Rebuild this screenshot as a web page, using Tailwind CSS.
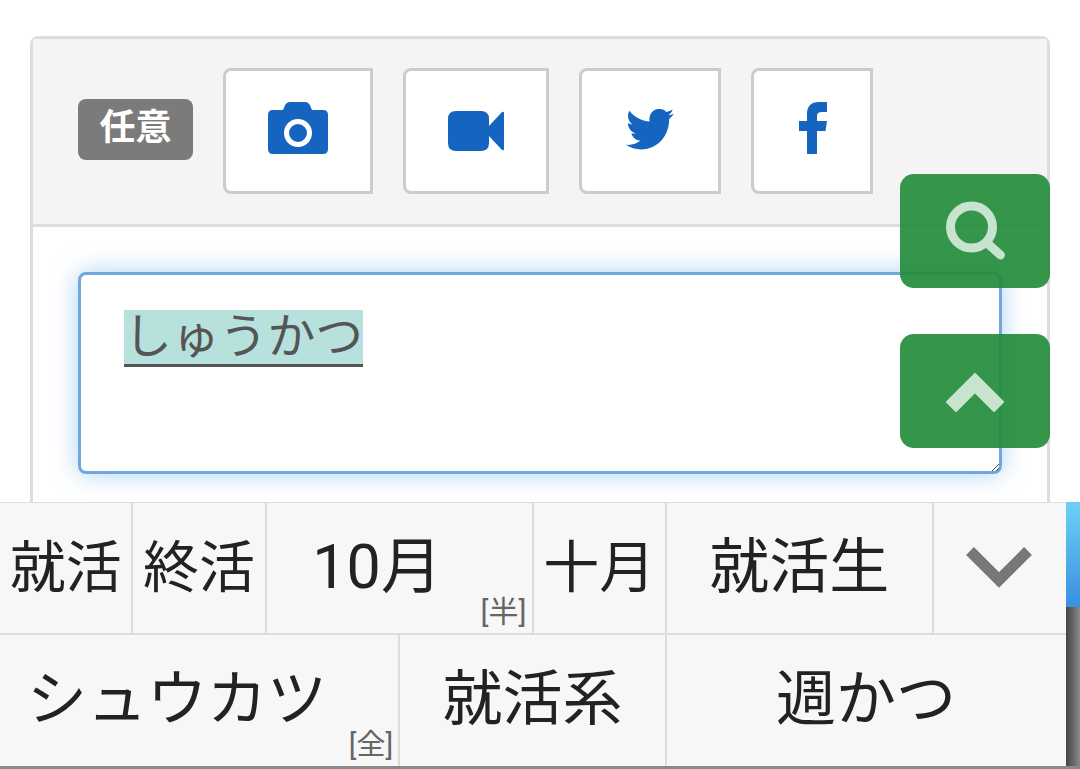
<!DOCTYPE html>
<html lang="ja">
<head>
  <meta charset="UTF-8" />
  <title>投稿フォーム</title>
  <script src="https://cdn.jsdelivr.net/npm/@tailwindcss/browser@4"></script>
</head>
<body class="relative h-[769px] overflow-hidden bg-white font-['Roboto','Noto_Sans_CJK_JP',sans-serif]">

  <!-- Form card -->
  <div class="px-[30px] pt-[36px]">
    <div class="h-[733px] rounded-t-lg border-[3px] border-b-0 border-[#dddddd] bg-white">

      <!-- Attachment row -->
      <div class="flex h-[188px] items-start gap-[30px] border-b-[3px] border-[#dddddd] bg-[#f4f4f4] pl-[45px] pt-[29px]">
        <span class="mt-[31px] flex h-[61px] w-[115px] items-center justify-center rounded-lg bg-[#7b7b7b] pb-[3px] text-[36px] font-bold text-white">任意</span>

        <button class="flex h-[126px] w-[150px] items-center justify-center rounded-l-lg border-[3px] border-[#cccccc] bg-white">
          <svg class="-mt-[6px] h-[52px] w-[60px] text-[#1565c0]" viewBox="0 0 60 52" fill="currentColor">
            <path fill-rule="evenodd" d="M5 8h10l1.500-3.500Q18 0 22 0h15q4 0 5.500 4.500L44 8h11q5 0 5 5v34q0 5-5 5H5q-5 0-5-5V13q0-5 5-5zM30 17a14 14 0 1 0 0 28 14 14 0 0 0 0-28zM30 22a9 9 0 1 1 0 18 9 9 0 0 1 0-18z"/>
          </svg>
        </button>

        <button class="flex h-[126px] w-[146px] items-center justify-center rounded-l-lg border-[3px] border-[#cccccc] bg-white">
          <svg class="h-[40px] w-[56px] text-[#1565c0]" viewBox="0 0 56 40" fill="currentColor">
            <path d="M8 0h25q8 0 8 8v24q0 8-8 8H8q-8 0-8-8V8q0-8 8-8z"/>
            <path d="M41 15 54 1q2-1 2 1v36q0 2-2 1L41 25z"/>
          </svg>
        </button>

        <button class="flex h-[126px] w-[142px] items-center justify-center rounded-l-lg border-[3px] border-[#cccccc] bg-white">
          <svg class="-mt-[3px] h-[41px] w-[48px] text-[#1565c0]" viewBox="0 50 512 420" preserveAspectRatio="none" fill="currentColor">
            <path d="M459.37 151.716c.325 4.548.325 9.097.325 13.645 0 138.72-105.583 298.558-298.558 298.558-59.452 0-114.68-17.219-161.137-47.106 8.447.974 16.568 1.299 25.34 1.299 49.055 0 94.213-16.568 130.274-44.832-46.132-.975-84.792-31.188-98.112-72.772 6.498.974 12.995 1.624 19.818 1.624 9.421 0 18.843-1.3 27.614-3.573-48.081-9.747-84.143-51.98-84.143-102.985v-1.299c13.969 7.797 30.214 12.67 47.431 13.319-28.264-18.843-46.781-51.005-46.781-87.391 0-19.492 5.197-37.36 14.294-52.954 51.655 63.675 129.3 105.258 216.365 109.807-1.624-7.797-2.599-15.918-2.599-24.04 0-57.828 46.782-104.934 104.934-104.934 30.213 0 57.502 12.67 76.67 33.137 23.715-4.548 46.456-13.32 66.599-25.34-7.798 24.366-24.366 44.833-46.132 57.827 21.117-2.273 41.584-8.122 60.426-16.243-14.292 20.791-32.161 39.308-52.628 54.253z"/>
          </svg>
        </button>

        <button class="flex h-[126px] w-[122px] items-center justify-center rounded-l-lg border-[3px] border-[#cccccc] bg-white">
          <svg class="-mt-[6px] ml-[1px] h-[52px] w-[28px] text-[#1565c0]" viewBox="0 0 28 52" fill="currentColor">
            <path d="M8 52V29H0V19h8v-7Q8 0 20 0h8v10h-5q-5 0-5 4v5h10l-1.500 10H18v23z"/>
          </svg>
        </button>
      </div>

      <!-- Text input -->
      <div class="px-[45px] pt-[45px]">
        <div class="relative h-[202px] w-[924px] rounded-lg border-[3px] border-[#6fa8dc] bg-white px-[43px] pt-[35px] shadow-[0_0_24px_rgba(102,175,233,0.55)]">
          <span class="inline-block h-[57px] border-b-[3px] border-[#555555] bg-[#b7e1dc] text-[47.8px] leading-[54px] text-[#555555]">しゅうかつ</span>
          <svg class="absolute bottom-0 right-0 h-[8px] w-[8px] text-[#444444]" viewBox="0 0 8 8" fill="none" stroke="currentColor">
            <path d="M1 8 8 1M5 8l3-3"/>
          </svg>
        </div>
      </div>
    </div>
  </div>

  <!-- Floating buttons -->
  <button class="absolute left-[900px] top-[174px] flex h-[114px] w-[150px] items-center justify-center rounded-[14px] bg-[#238c3c]/92">
    <svg class="h-[60px] w-[62px] text-[#c8e4cf]" viewBox="0 0 62 60" fill="none" stroke="currentColor" stroke-linecap="round">
      <circle cx="27.500" cy="26" r="21" stroke-width="9"/>
      <path d="M43 42 56.500 54" stroke-width="9"/>
    </svg>
  </button>
  <button class="absolute left-[900px] top-[334px] flex h-[114px] w-[150px] items-center justify-center rounded-[14px] bg-[#238c3c]/92">
    <svg class="mt-[3px] h-[41px] w-[60px] text-[#c8e4cf]" viewBox="-1 -1 60 41" fill="currentColor" stroke="currentColor" stroke-width="2" stroke-linejoin="round">
      <path d="M29 1 57 29 48 38 29 19 10 38 1 29z"/>
    </svg>
  </button>

  <!-- IME suggestion bar -->
  <div class="absolute bottom-0 left-0 flex h-[267px] w-full border-b-[3px] border-[#8a8a8a]">
    <div class="grid h-full w-[1067px] shrink-0 grid-cols-8 grid-rows-2 border-t border-[#dddddd] bg-[#f7f7f7] text-[#222222]">
      <div class="flex items-center justify-center border-r-2 border-b-2 border-[#dddddd] text-[56px]">就活</div>
      <div class="flex items-center justify-center border-r-2 border-b-2 border-[#dddddd] text-[56px]">終活</div>
      <div class="relative col-span-2 flex items-center justify-center border-r-2 border-b-2 border-[#dddddd] pr-[44px] text-[61px]">10月
        <span class="absolute bottom-[6px] right-[5px] text-[30px] leading-none text-[#666666]">[半]</span>
      </div>
      <div class="flex items-center justify-center border-r-2 border-b-2 border-[#dddddd] text-[56px]">十月</div>
      <div class="col-span-2 flex items-center justify-center border-r-2 border-b-2 border-[#dddddd] text-[60px]">就活生</div>
      <div class="flex items-center justify-center border-b-2 border-[#dddddd] pr-[2px]">
        <svg class="h-[42px] w-[66px] text-[#777777]" viewBox="0 0 66 42" fill="none" stroke="currentColor">
          <path d="M4 4 33 33 62 4" stroke-width="11"/>
        </svg>
      </div>

      <div class="relative col-span-3 flex items-center justify-center border-r-2 border-[#dddddd] pr-[44px] text-[60px]">シュウカツ
        <span class="absolute bottom-[6px] right-[5px] text-[29px] leading-none text-[#666666]">[全]</span>
      </div>
      <div class="col-span-2 flex items-center justify-center border-r-2 border-[#dddddd] text-[60px]">就活系</div>
      <div class="col-span-3 flex items-center justify-center pr-[2px] text-[60px]">週かつ</div>
    </div>

    <!-- Scroll indicator -->
    <div class="relative -ml-[1px] flex w-[14px] flex-col bg-gradient-to-r from-[#444444] to-[#8a8a8a]">
      <div class="h-[105px] bg-gradient-to-b from-[#6fd0f5] to-[#3a8fe0]"></div>
    </div>
  </div>

</body>
</html>
